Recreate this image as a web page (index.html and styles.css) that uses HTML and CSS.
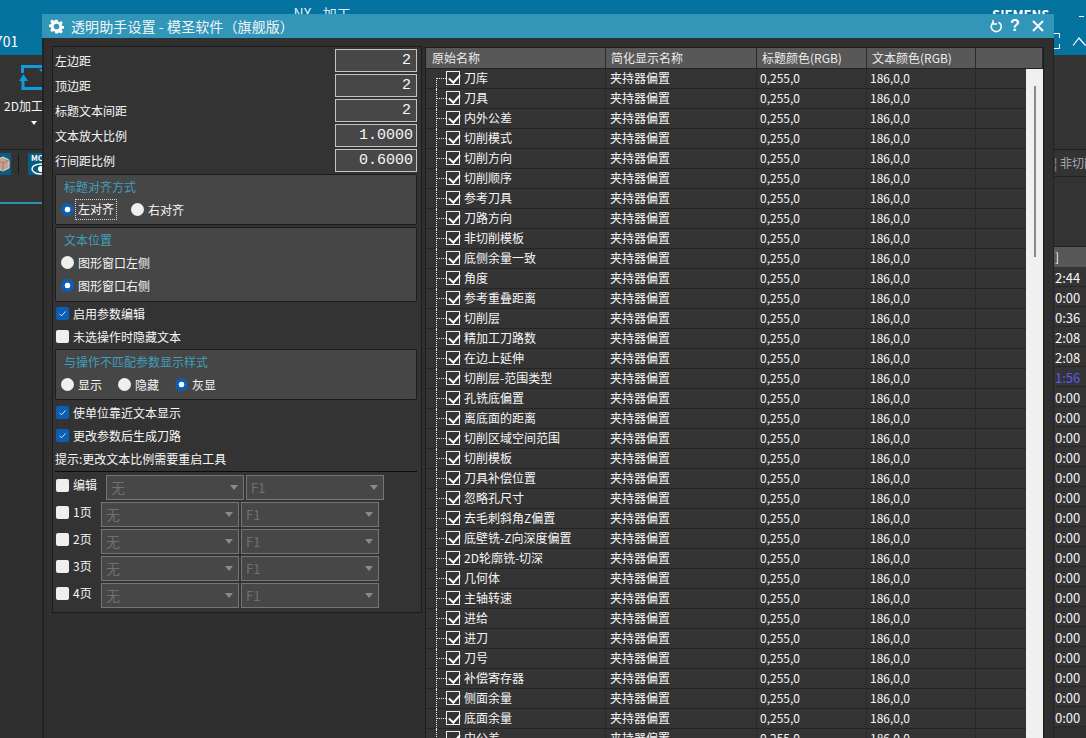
FILE: index.html
```html
<!DOCTYPE html>
<html lang="zh-CN">
<head>
<meta charset="utf-8">
<title>透明助手设置 - 模圣软件（旗舰版）</title>
<link rel="stylesheet" href="styles.css">
</head>
<body>
<div class="app">
  <header class="topbar">
    <div class="top-left">701</div>
    <div class="top-nx">NX - 加工</div>
    <div class="top-siemens">SIEMENS</div>
    <div class="top-right">
      <span class="top-dash"></span>
      <div class="top-controls">
        <svg width="8" height="16" viewBox="0 0 8 16"><path d="M0 .5H5.5V5M5.5 11V15.5H0" fill="none" stroke="#fff"/></svg>
        <svg width="14" height="10" viewBox="0 0 14 10"><path d="M1 9.5 7 2l6.5 7.5" fill="none" stroke="#fff" stroke-width="1.2"/></svg>
      </div>
    </div>
  </header>
  <div class="main">
    <aside class="bg-left">
      <div class="ribbon">
        <svg class="ribbon-icon" width="24" height="27" viewBox="0 0 24 27"><path d="M3.5 9V2.5H24M4 16V24.5H24" fill="none" stroke="#0f9be0" stroke-width="3"/><path d="M0 17 4.5 10 9 17zM20 5h4v5z" fill="#0f9be0"/></svg>
        <div class="ribbon-label">2D加工公共</div>
        <div class="ribbon-caret"></div>
      </div>
      <div class="tools">
        <div class="tile tile-cube"><svg width="11" height="22" viewBox="0 0 11 22"><path d="M-4 7 3 4l6 3v8l-6 3-7-3z" fill="#b9a79c" stroke="#e8dcd4"/><path d="M-4 7l7 3 6-3M3 10v8" fill="none" stroke="#d8643c"/></svg></div>
        <div class="tool-sep"></div>
        <div class="tile tile-mc"><span class="mc-text">MC</span><svg width="14" height="12" viewBox="0 0 14 12"><ellipse cx="10" cy="6" rx="9" ry="5" fill="none" stroke="#fff" stroke-width="1.4"/><circle cx="10" cy="6" r="3" fill="#fff"/></svg></div>
      </div>
      <div class="tabline"></div>
    </aside>
    <aside class="bg-right">
      <div class="ribbon-r"></div>
      <div class="tools-r"><span class="tools-r-bar">¦</span>非切削</div>
      <div class="gap-r"></div>
      <div class="bg-head">]</div>
      <div class="bg-row">2:44</div>
      <div class="bg-row">0:00</div>
      <div class="bg-row">0:36</div>
      <div class="bg-row">2:08</div>
      <div class="bg-row">2:08</div>
      <div class="bg-row bg-row-blue">1:56</div>
      <div class="bg-row">0:00</div>
      <div class="bg-row">0:00</div>
      <div class="bg-row">0:00</div>
      <div class="bg-row">0:00</div>
      <div class="bg-row">0:00</div>
      <div class="bg-row">0:00</div>
      <div class="bg-row">0:00</div>
      <div class="bg-row">0:00</div>
      <div class="bg-row">0:00</div>
      <div class="bg-row">0:00</div>
      <div class="bg-row">0:00</div>
      <div class="bg-row">0:00</div>
      <div class="bg-row">0:00</div>
      <div class="bg-row">0:00</div>
      <div class="bg-row">0:00</div>
      <div class="bg-row">0:00</div>
      <div class="bg-row">0:00</div>
    </aside>
  </div>
</div>

<section class="dialog">
  <div class="titlebar">
    <svg class="gear" width="15" height="15" viewBox="0 0 24 24"><path fill="#fff" fill-rule="evenodd" d="M10 1h4l.6 3.2 1.9.8 2.7-1.8 2.8 2.8-1.8 2.7.8 1.9 3 .6v4l-3 .6-.8 1.9 1.8 2.7-2.8 2.8-2.7-1.8-1.9.8L14 23h-4l-.6-3.2-1.9-.8-2.7 1.8L2 18l1.8-2.7-.8-1.9-3-.6v-4l3-.6.8-1.9L2 3.6 4.8 .8l2.7 1.8 1.9-.8zM12 7.5a4.5 4.5 0 1 0 0 9 4.5 4.5 0 0 0 0-9z"/></svg>
    <span class="title-text">透明助手设置 - 模圣软件（旗舰版）</span>
    <div class="title-tools">
      <svg width="13" height="13" viewBox="0 0 13 13"><path d="M8.5 2.2a5 5 0 1 1-4.5 0" fill="none" stroke="#fff" stroke-width="1.6"/><path d="M3 0v4h4" fill="none" stroke="#fff" stroke-width="1.4"/></svg>
      <span class="title-help">?</span>
      <svg width="12" height="12" viewBox="0 0 12 12"><path d="M1 1l10 10M11 1 1 11" stroke="#fff" stroke-width="2"/></svg>
    </div>
  </div>
  <div class="dialog-body">
    <div class="panel">
      <div class="field"><span>左边距</span><div class="num">2</div></div>
      <div class="field"><span>顶边距</span><div class="num">2</div></div>
      <div class="field"><span>标题文本间距</span><div class="num">2</div></div>
      <div class="field"><span>文本放大比例</span><div class="num num-clip"><span>1.0000</span></div></div>
      <div class="field"><span>行间距比例</span><div class="num num-clip"><span>0.6000</span></div></div>

      <div class="group group-first">
        <div class="group-title">标题对齐方式</div>
        <div class="radios">
          <span class="radio on"></span><span class="radio-text focus">左对齐</span>
          <span class="radio"></span><span class="radio-text">右对齐</span>
        </div>
      </div>

      <div class="group group-tall">
        <div class="group-title">文本位置</div>
        <div class="radios"><span class="radio"></span><span class="radio-text">图形窗口左侧</span></div>
        <div class="radios"><span class="radio on"></span><span class="radio-text">图形窗口右侧</span></div>
      </div>

      <div class="check-row"><span class="check on"><svg width="13" height="13" viewBox="0 0 13 13"><path d="M3.5 6.8l2 2 4-4.4" fill="none" stroke="#cfe4fa" stroke-width="1"/></svg></span>启用参数编辑</div>
      <div class="check-row"><span class="check"></span>未选操作时隐藏文本</div>

      <div class="group group-third">
        <div class="group-title">与操作不匹配参数显示样式</div>
        <div class="radios">
          <span class="radio"></span><span class="radio-text">显示</span>
          <span class="radio"></span><span class="radio-text">隐藏</span>
          <span class="radio on"></span><span class="radio-text">灰显</span>
        </div>
      </div>

      <div class="check-row"><span class="check on"><svg width="13" height="13" viewBox="0 0 13 13"><path d="M3.5 6.8l2 2 4-4.4" fill="none" stroke="#cfe4fa" stroke-width="1"/></svg></span>使单位靠近文本显示</div>
      <div class="check-row"><span class="check on"><svg width="13" height="13" viewBox="0 0 13 13"><path d="M3.5 6.8l2 2 4-4.4" fill="none" stroke="#cfe4fa" stroke-width="1"/></svg></span>更改参数后生成刀路</div>
      <div class="hint">提示:更改文本比例需要重启工具</div>
      <div class="rule"></div>

      <div class="combo-row combo-row-first"><span class="check"></span><span class="combo-label">编辑</span><div class="combo">无<i></i></div><div class="combo combo-f">F1<i></i></div></div>
      <div class="combo-row"><span class="check"></span><span class="combo-label">1页</span><div class="combo">无<i></i></div><div class="combo combo-f">F1<i></i></div></div>
      <div class="combo-row"><span class="check"></span><span class="combo-label">2页</span><div class="combo">无<i></i></div><div class="combo combo-f">F1<i></i></div></div>
      <div class="combo-row"><span class="check"></span><span class="combo-label">3页</span><div class="combo">无<i></i></div><div class="combo combo-f">F1<i></i></div></div>
      <div class="combo-row"><span class="check"></span><span class="combo-label">4页</span><div class="combo">无<i></i></div><div class="combo combo-f">F1<i></i></div></div>
    </div>

    <div class="tree">
      <div class="tree-head">
        <div class="c1">原始名称</div><div class="c2">简化显示名称</div><div class="c3">标题颜色(RGB)</div><div class="c4">文本颜色(RGB)</div><div class="c5"></div>
      </div>
      <div class="tree-rows">
        <div class="tree-row tree-row-first"><div class="c1"><span class="branch"></span><span class="tick"></span>刀库</div><div class="c2">夹持器偏置</div><div class="c3">0,255,0</div><div class="c4">186,0,0</div><div class="c5"></div></div>
        <div class="tree-row"><div class="c1"><span class="branch"></span><span class="tick"></span>刀具</div><div class="c2">夹持器偏置</div><div class="c3">0,255,0</div><div class="c4">186,0,0</div><div class="c5"></div></div>
        <div class="tree-row"><div class="c1"><span class="branch"></span><span class="tick"></span>内外公差</div><div class="c2">夹持器偏置</div><div class="c3">0,255,0</div><div class="c4">186,0,0</div><div class="c5"></div></div>
        <div class="tree-row"><div class="c1"><span class="branch"></span><span class="tick"></span>切削模式</div><div class="c2">夹持器偏置</div><div class="c3">0,255,0</div><div class="c4">186,0,0</div><div class="c5"></div></div>
        <div class="tree-row"><div class="c1"><span class="branch"></span><span class="tick"></span>切削方向</div><div class="c2">夹持器偏置</div><div class="c3">0,255,0</div><div class="c4">186,0,0</div><div class="c5"></div></div>
        <div class="tree-row"><div class="c1"><span class="branch"></span><span class="tick"></span>切削顺序</div><div class="c2">夹持器偏置</div><div class="c3">0,255,0</div><div class="c4">186,0,0</div><div class="c5"></div></div>
        <div class="tree-row"><div class="c1"><span class="branch"></span><span class="tick"></span>参考刀具</div><div class="c2">夹持器偏置</div><div class="c3">0,255,0</div><div class="c4">186,0,0</div><div class="c5"></div></div>
        <div class="tree-row"><div class="c1"><span class="branch"></span><span class="tick"></span>刀路方向</div><div class="c2">夹持器偏置</div><div class="c3">0,255,0</div><div class="c4">186,0,0</div><div class="c5"></div></div>
        <div class="tree-row"><div class="c1"><span class="branch"></span><span class="tick"></span>非切削模板</div><div class="c2">夹持器偏置</div><div class="c3">0,255,0</div><div class="c4">186,0,0</div><div class="c5"></div></div>
        <div class="tree-row"><div class="c1"><span class="branch"></span><span class="tick"></span>底侧余量一致</div><div class="c2">夹持器偏置</div><div class="c3">0,255,0</div><div class="c4">186,0,0</div><div class="c5"></div></div>
        <div class="tree-row"><div class="c1"><span class="branch"></span><span class="tick"></span>角度</div><div class="c2">夹持器偏置</div><div class="c3">0,255,0</div><div class="c4">186,0,0</div><div class="c5"></div></div>
        <div class="tree-row"><div class="c1"><span class="branch"></span><span class="tick"></span>参考重叠距离</div><div class="c2">夹持器偏置</div><div class="c3">0,255,0</div><div class="c4">186,0,0</div><div class="c5"></div></div>
        <div class="tree-row"><div class="c1"><span class="branch"></span><span class="tick"></span>切削层</div><div class="c2">夹持器偏置</div><div class="c3">0,255,0</div><div class="c4">186,0,0</div><div class="c5"></div></div>
        <div class="tree-row"><div class="c1"><span class="branch"></span><span class="tick"></span>精加工刀路数</div><div class="c2">夹持器偏置</div><div class="c3">0,255,0</div><div class="c4">186,0,0</div><div class="c5"></div></div>
        <div class="tree-row"><div class="c1"><span class="branch"></span><span class="tick"></span>在边上延伸</div><div class="c2">夹持器偏置</div><div class="c3">0,255,0</div><div class="c4">186,0,0</div><div class="c5"></div></div>
        <div class="tree-row"><div class="c1"><span class="branch"></span><span class="tick"></span>切削层-范围类型</div><div class="c2">夹持器偏置</div><div class="c3">0,255,0</div><div class="c4">186,0,0</div><div class="c5"></div></div>
        <div class="tree-row"><div class="c1"><span class="branch"></span><span class="tick"></span>孔铣底偏置</div><div class="c2">夹持器偏置</div><div class="c3">0,255,0</div><div class="c4">186,0,0</div><div class="c5"></div></div>
        <div class="tree-row"><div class="c1"><span class="branch"></span><span class="tick"></span>离底面的距离</div><div class="c2">夹持器偏置</div><div class="c3">0,255,0</div><div class="c4">186,0,0</div><div class="c5"></div></div>
        <div class="tree-row"><div class="c1"><span class="branch"></span><span class="tick"></span>切削区域空间范围</div><div class="c2">夹持器偏置</div><div class="c3">0,255,0</div><div class="c4">186,0,0</div><div class="c5"></div></div>
        <div class="tree-row"><div class="c1"><span class="branch"></span><span class="tick"></span>切削模板</div><div class="c2">夹持器偏置</div><div class="c3">0,255,0</div><div class="c4">186,0,0</div><div class="c5"></div></div>
        <div class="tree-row"><div class="c1"><span class="branch"></span><span class="tick"></span>刀具补偿位置</div><div class="c2">夹持器偏置</div><div class="c3">0,255,0</div><div class="c4">186,0,0</div><div class="c5"></div></div>
        <div class="tree-row"><div class="c1"><span class="branch"></span><span class="tick"></span>忽略孔尺寸</div><div class="c2">夹持器偏置</div><div class="c3">0,255,0</div><div class="c4">186,0,0</div><div class="c5"></div></div>
        <div class="tree-row"><div class="c1"><span class="branch"></span><span class="tick"></span>去毛刺斜角Z偏置</div><div class="c2">夹持器偏置</div><div class="c3">0,255,0</div><div class="c4">186,0,0</div><div class="c5"></div></div>
        <div class="tree-row"><div class="c1"><span class="branch"></span><span class="tick"></span>底壁铣-Z向深度偏置</div><div class="c2">夹持器偏置</div><div class="c3">0,255,0</div><div class="c4">186,0,0</div><div class="c5"></div></div>
        <div class="tree-row"><div class="c1"><span class="branch"></span><span class="tick"></span>2D轮廓铣-切深</div><div class="c2">夹持器偏置</div><div class="c3">0,255,0</div><div class="c4">186,0,0</div><div class="c5"></div></div>
        <div class="tree-row"><div class="c1"><span class="branch"></span><span class="tick"></span>几何体</div><div class="c2">夹持器偏置</div><div class="c3">0,255,0</div><div class="c4">186,0,0</div><div class="c5"></div></div>
        <div class="tree-row"><div class="c1"><span class="branch"></span><span class="tick"></span>主轴转速</div><div class="c2">夹持器偏置</div><div class="c3">0,255,0</div><div class="c4">186,0,0</div><div class="c5"></div></div>
        <div class="tree-row"><div class="c1"><span class="branch"></span><span class="tick"></span>进给</div><div class="c2">夹持器偏置</div><div class="c3">0,255,0</div><div class="c4">186,0,0</div><div class="c5"></div></div>
        <div class="tree-row"><div class="c1"><span class="branch"></span><span class="tick"></span>进刀</div><div class="c2">夹持器偏置</div><div class="c3">0,255,0</div><div class="c4">186,0,0</div><div class="c5"></div></div>
        <div class="tree-row"><div class="c1"><span class="branch"></span><span class="tick"></span>刀号</div><div class="c2">夹持器偏置</div><div class="c3">0,255,0</div><div class="c4">186,0,0</div><div class="c5"></div></div>
        <div class="tree-row"><div class="c1"><span class="branch"></span><span class="tick"></span>补偿寄存器</div><div class="c2">夹持器偏置</div><div class="c3">0,255,0</div><div class="c4">186,0,0</div><div class="c5"></div></div>
        <div class="tree-row"><div class="c1"><span class="branch"></span><span class="tick"></span>侧面余量</div><div class="c2">夹持器偏置</div><div class="c3">0,255,0</div><div class="c4">186,0,0</div><div class="c5"></div></div>
        <div class="tree-row"><div class="c1"><span class="branch"></span><span class="tick"></span>底面余量</div><div class="c2">夹持器偏置</div><div class="c3">0,255,0</div><div class="c4">186,0,0</div><div class="c5"></div></div>
        <div class="tree-row"><div class="c1"><span class="branch"></span><span class="tick"></span>中公差</div><div class="c2">夹持器偏置</div><div class="c3">0,255,0</div><div class="c4">186,0,0</div><div class="c5"></div></div>
        <div class="scrollbar"><div class="thumb"></div></div>
      </div>
    </div>
  </div>
</section>
</body>
</html>
```

FILE: styles.css
```css
* { box-sizing: border-box; }
html, body {
  margin: 0;
  width: 1086px;
  height: 738px;
  overflow: hidden;
}
body {
  position: relative;
  background: #2f2f2f;
  color: #f6f6f6;
  font: 12px/20px "Noto Sans CJK SC", "Liberation Sans", sans-serif;
}

/* background application */
.app { display: flex; flex-direction: column; height: 738px; }
.topbar {
  display: flex;
  height: 55px;
  flex: none;
  background: #05739f;
  color: #fff;
}
.top-left { width: 299px; padding-top: 31px; font-size: 14px; margin-left: -5px; }
.top-nx { width: 700px; font-size: 14px; line-height: 22px; padding-top: 2px; color: #dfeef5; white-space: nowrap; }
.top-siemens { width: 60px; font-size: 13px; font-weight: 700; line-height: 22px; padding-top: 4px; overflow: hidden; white-space: nowrap; }
.top-right { flex: 1; display: flex; flex-direction: column; }
.top-dash { height: 1px; width: 5px; background: #fff; margin: 16px 0 0 27px; }
.top-controls { display: flex; align-items: center; gap: 10px; margin: 16px 0 0 2px; }

.main { flex: 1; display: flex; justify-content: space-between; min-height: 0; }
.bg-left { width: 60px; display: flex; flex-direction: column; }
.ribbon { height: 95px; flex: none; background: #333; border-bottom: 1px solid #1f1f1f; padding-left: 4px; display: flex; flex-direction: column; }
.ribbon-icon { margin: 9px 0 0 15px; flex: none; overflow: visible; }
.ribbon-label { white-space: nowrap; line-height: 18px; margin-top: 6px; }
.ribbon-caret { width: 0; border: 3px solid transparent; border-top: 4px solid #fff; border-bottom: 0; margin: 6px 0 0 27px; }
.tools { height: 27px; flex: none; background: #333; display: flex; align-items: center; }
.tile { height: 22px; background: #0c5c80; overflow: hidden; }
.tile-cube { width: 11px; }
.tool-sep { width: 1px; height: 20px; background: #1c1c1c; margin: 0 9px 0 7px; }
.tile-mc { width: 22px; position: relative; display: flex; flex-direction: column; padding-left: 3px; }
.mc-text { font-size: 8px; line-height: 10px; font-weight: 700; color: #fff; }
.tabline { height: 27px; flex: none; background: #333; border-bottom: 2px solid #2f8fae; }

.bg-right { width: 32px; display: flex; flex-direction: column; background: #2f2f2f; overflow: hidden; }
.ribbon-r { height: 95px; flex: none; background: #333; border-bottom: 1px solid #1f1f1f; }
.tools-r { height: 27px; flex: none; background: #333; border-bottom: 1px solid #222; color: #a8a8a8; white-space: nowrap; line-height: 26px; }
.tools-r-bar { display: inline-block; width: 6px; }
.gap-r { height: 70px; flex: none; background: #333; border-bottom: 1px solid #222; }
.bg-head { height: 20px; flex: none; background: #585858; padding-left: 1px; line-height: 20px; }
.bg-row { height: 20px; flex: none; border-bottom: 1px solid #262626; background: #343434; padding-left: 1px; font-size: 13px; line-height: 22px; }
.bg-row-blue { color: #5b5bf0; }

/* dialog */
.dialog {
  position: absolute;
  left: 42px;
  top: 14px;
  width: 1012px;
  height: 724px;
  display: flex;
  flex-direction: column;
  overflow: hidden;
  background: #2f2f2f;
}
.titlebar {
  height: 24px;
  flex: none;
  background: #3296b8;
  display: flex;
  align-items: center;
  padding-left: 7px;
  color: #f0f6f9;
}
.gear { flex: none; }
.title-text { margin-left: 7px; font-size: 14px; line-height: 24px; letter-spacing: .1px; }
.title-tools { margin-left: auto; display: flex; align-items: center; padding-right: 10px; gap: 8px; }
.title-help { font: 700 16px/20px "Liberation Sans", sans-serif; color: #fff; width: 10px; margin-left: -1px; margin-right: 4px; }

.dialog-body {
  flex: 1;
  min-height: 0;
  display: flex;
  align-items: flex-start;
  padding: 8px 10px 0 8px;
  border-left: 2px solid #232323;
  border-right: 1px solid #232323;
}

.panel {
  width: 370px;
  height: 567px;
  flex: none;
  border: 1px solid #1c1c1c;
  padding: 2px 4px 0 2px;
  background: #333;
}
.field { height: 23px; margin-bottom: 2px; display: flex; justify-content: space-between; align-items: center; }
.num {
  width: 82px;
  height: 23px;
  border: 1px solid #c4c4c4;
  background: #474747;
  font: 15px/21px "Liberation Mono", "DejaVu Sans Mono", monospace;
  text-align: right;
  padding-right: 5px;
  overflow: hidden;
  color: #f8f8f8;
}
.num-clip { padding-right: 3px; }

.group {
  background: #464646;
  border: 1px solid #1c1c1c;
  border-radius: 2px;
  margin-bottom: 2px;
}
.group-first { height: 51px; }
.group-tall { height: 75px; margin-bottom: 0; }
.group-third { height: 51px; margin-top: 1px; margin-bottom: 1px; }
.group-title { height: 23px; line-height: 23px; padding-left: 8px; color: #3f9fbc; }
.radios { height: 23px; display: flex; align-items: center; padding-left: 5px; }
.radio {
  width: 13px;
  height: 13px;
  border-radius: 50%;
  background: #efefef;
  flex: none;
}
.radio.on { background: radial-gradient(circle, #fff 0 2.5px, #0a5fb5 3.2px); }
.radio-text { margin: 0 16px 0 4px; line-height: 18px; }
.focus { outline: 1px dotted #d8d8d8; outline-offset: 0; padding: 0 2px; margin: 0 15px 0 2px; height: 19px; }

.check-row { height: 23px; display: flex; align-items: center; padding-left: 1px; gap: 4px; white-space: nowrap; }
.check {
  width: 13px;
  height: 13px;
  flex: none;
  border-radius: 2px;
  background: #efefef;
  display: block;
}
.check.on { background: #0a5fb5; }
.check svg { display: block; }
.hint { height: 23px; line-height: 23px; white-space: nowrap; }
.rule { height: 1px; background: #0c0c0c; margin: 1px 0 3px; }

.combo-row { height: 25px; margin-bottom: 2px; display: flex; align-items: center; padding-left: 1px; }
.combo-row > .check { margin-bottom: 4px; margin-right: 3px; }
.combo-label { width: 28px; padding-bottom: 5px; white-space: nowrap; margin-left: 1px; }
.combo-row-first .combo-label { width: 33px; }
.combo {
  width: 138px;
  height: 25px;
  margin-right: 2px;
  border: 1px solid #757575;
  background: #474747;
  color: #707070;
  font-size: 14px;
  line-height: 23px;
  padding: 0 5px 1px 4px;
  display: flex;
  align-items: center;
  justify-content: space-between;
  flex: none;
}
.combo-f { font-size: 13px; }
.combo i { width: 0; border: 4px solid transparent; border-top: 5px solid #8a8a8a; border-bottom: 0; }

/* tree */
.tree {
  width: 619px;
  height: 700px;
  margin-left: 3px;
  margin-top: 1px;
  flex: none;
  border: 1px solid #1c1c1c;
  overflow: hidden;
  background: #333;
}
.tree-head { height: 21px; display: flex; background: #585858; border-bottom: 1px solid #222; color: #ececec; }
.tree-head > div { line-height: 20px; border-right: 1px solid #2a2a2a; }
.tree-head .c1 { padding-left: 6px; }
.tree-head .c2, .tree-head .c3, .tree-head .c4 { padding-left: 5px; }
.c1 { width: 180px; flex: none; display: flex; align-items: center; }
.c2 { width: 151px; flex: none; padding-left: 4px; }
.c3 { width: 110px; flex: none; padding-left: 3px; }
.c4 { width: 109px; flex: none; padding-left: 3px; }
.c5 { flex: 1; }
.tree-rows { position: relative; }
.tree-row { height: 20px; display: flex; background: #343434; border-bottom: 1px solid #242424; line-height: 18px; }
.tree-row > div { border-right: 1px solid #2a2a2a; }
.tree-row .c1 { padding: 0 0 1px 10px; }
.branch {
  width: 10px;
  height: 20px;
  flex: none;
  align-self: flex-start;
  position: relative;
  border-left: 1px dotted #f0f0f0;
}
.branch::after {
  content: "";
  position: absolute;
  left: 0;
  top: 9px;
  width: 9px;
  border-top: 1px dotted #f0f0f0;
}
.tree-row-first .branch { height: 11px; margin-top: 9px; }
.tree-row-first .branch::after { top: 0; }
.tick {
  width: 14px;
  height: 14px;
  flex: none;
  margin-right: 4px;
  border: 1px solid #f0f0f0;
  position: relative;
}
.tick::after {
  content: "";
  position: absolute;
  left: 3.5px;
  top: 0;
  width: 5px;
  height: 9px;
  border-right: 2px solid #fff;
  border-bottom: 2px solid #fff;
  transform: rotate(42deg);
}
.scrollbar {
  position: absolute;
  right: 0;
  top: 0;
  width: 17px;
  height: 100%;
  background: #f0f0f0;
  padding: 17px 0 0 8px;
}
.thumb { width: 2px; height: 171px; background: #8a8a8a; }
```
